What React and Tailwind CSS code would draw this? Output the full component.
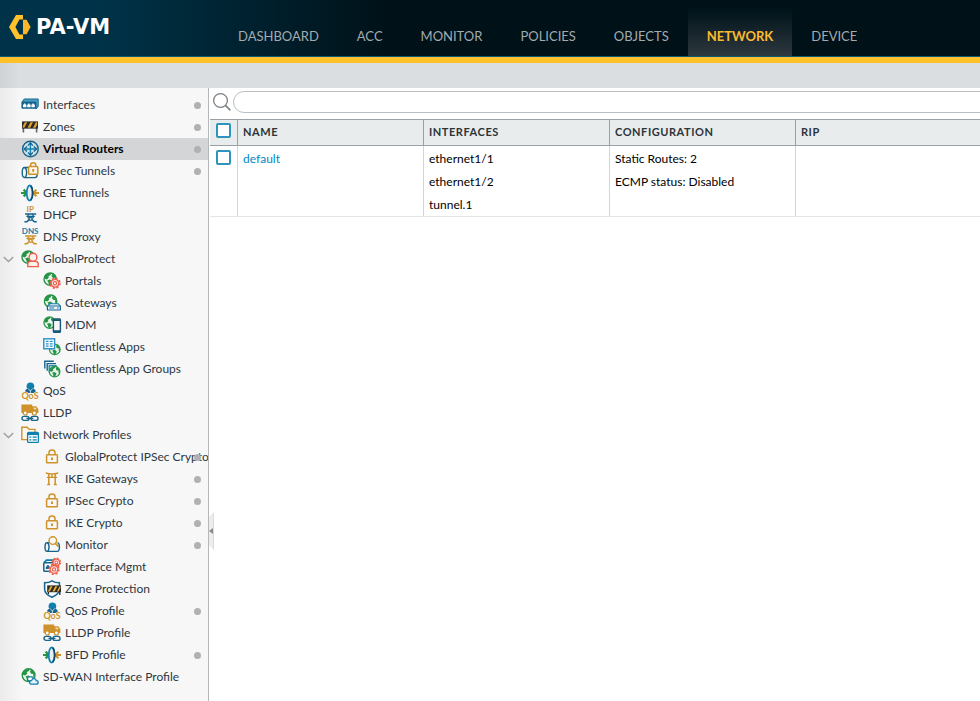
import { useState } from "react";

const BLUE = "#0f7fae";
const NAVY = "#17648c";
const GOLD = "#cf922b";
const GREEN = "#259444";
const RED = "#ee5f4a";

function Icon({ children }) {
  return (
    <svg viewBox="0 0 18 18" className="h-[18px] w-[18px] shrink-0 overflow-visible" fill="none" aria-hidden="true">
      {children}
    </svg>
  );
}

function Globe({ x = 7.2, y = 7.2, r = 7 }) {
  return (
    <g transform={`translate(${x} ${y}) scale(${r / 7})`}>
      <circle r="6.2" fill="#edf5ef" stroke={GREEN} strokeWidth="1.4" />
      <path d="M-5.8-2C-4.6-5-1.6-6.4 1-6L.4-4.2-1.8-3-1.4-1.4-3.4.2-5.6-.4Z" fill={GREEN} />
      <path d="M2.2-5.8C5.6-4.2 6.6-.8 5.8 2.2L4.4 1 4.6-1.2 2.6-1.4 1.4-3Z" fill={GREEN} />
      <path d="M-3 1.2-.4.4 2.2 1.8 1.8 3.8.2 6-1.4 5.4-1.8 3.2Z" fill={GREEN} />
    </g>
  );
}

function InterfacesIcon() {
  return (
    <Icon>
      <path d="M1 6 3.2 3h14v7.4L15 13.2" fill="#4aa0c4" />
      <path d="M1 6 3.2 3h14v7.2L15 13" stroke={NAVY} strokeWidth="1" />
      <rect x=".4" y="5.6" width="15" height="7.2" rx="1" fill={NAVY} />
      <path d="M2 11.2V8.6h1v-1h1.4v1h1v2.6ZM6.2 11.2V8.6h1v-1h1.4v1h1v2.6ZM10.4 11.2V8.6h1v-1h1.4v1h1v2.6Z" fill="#fff" />
    </Icon>
  );
}

function ZonesIcon() {
  return (
    <Icon>
      <path d="M2.4 9v5.4M15.6 9v5.4" stroke="#666" strokeWidth="1.6" />
      <rect x="1" y="3.4" width="16" height="7.2" fill="#2b2926" />
      <path d="M3.8 4.2h2.4L3.4 9.8H1.8V8ZM9.4 4.2h2.6L9.2 9.8H6.6ZM14.8 4.2h1.4v2.4l-1.6 3.2H12Z" fill="#dda12f" />
    </Icon>
  );
}

function RouterIcon() {
  return (
    <Icon>
      <circle cx="9.4" cy="9" r="7.8" fill="#cfe0e9" stroke={NAVY} strokeWidth="1.4" />
      <path d="M9.4 3v12M3.4 9h12" stroke={BLUE} strokeWidth="1.3" />
      <path d="m7 5.6 2.4-2.8 2.4 2.8M7 12.4l2.4 2.8 2.4-2.8M6 6.6 3.2 9 6 11.4M12.8 6.6 15.6 9l-2.8 2.4" stroke={NAVY} strokeWidth="1.3" />
    </Icon>
  );
}

function IpsecTunnelIcon() {
  return (
    <Icon>
      <path d="M7 5.5H3.5C2 5.5 1.2 7.8 1.2 10.6S2 15.6 3.5 15.6H14c1.6 0 2.2-1.4 2.2-3M3.6 5.5c1.4.6 2 2.6 2 5.1s-.6 4.4-2 5" stroke={NAVY} strokeWidth="1.4" />
      <rect x="7.6" y="4.6" width="9.2" height="7.6" rx=".8" fill="#fdf7ea" stroke={GOLD} strokeWidth="1.5" />
      <path d="M9.6 4.6V3.2C9.6 0 14.8 0 14.8 3.2v1.4" stroke={GOLD} strokeWidth="1.5" />
      <path d="M12.2 7v2.8" stroke={GOLD} strokeWidth="2" />
    </Icon>
  );
}

function GreIcon() {
  return (
    <Icon>
      <path d="M0 9h5.6M2.6 5.6 6 9l-3.4 3.4" stroke={GREEN} strokeWidth="2.2" />
      <path d="M18 9h-5.4M15.4 5.8 12.2 9l3.2 3.2" stroke={GOLD} strokeWidth="2" />
      <ellipse cx="8.6" cy="9" rx="2.8" ry="7.6" fill="#e6eff4" stroke={BLUE} strokeWidth="1.6" />
      <path d="M9.8 1.8c2.8 3.2 2.8 11.2 0 14.4" stroke="#0f4767" strokeWidth="1.5" />
    </Icon>
  );
}

function NodeShape({ color }) {
  return (
    <g stroke={color}>
      <path d="M4 8h11.2M5.4 10.4h8.4" strokeWidth="1.4" />
      <path d="M8 8c-2 2.4-1.2 4 0 4.2M11.2 8c2 2.4 1.2 4 0 4.2" strokeWidth="1.2" />
      <circle cx="9.6" cy="12.8" r="1.5" strokeWidth="1.3" />
      <path d="M8.2 13.6 5.8 15.8H3.4M11 13.6l2.4 2.2h2.4" strokeWidth="1.6" />
    </g>
  );
}

function DhcpIcon() {
  return (
    <Icon>
      <text x="5.6" y="6" fontSize="8" fontWeight="700" fontFamily="Lato, sans-serif" fill={GOLD}>IP</text>
      <NodeShape color={NAVY} />
    </Icon>
  );
}

function DnsIcon() {
  return (
    <Icon>
      <text x=".8" y="6" fontSize="8" fontWeight="700" fontFamily="Lato, sans-serif" fill={BLUE}>DNS</text>
      <NodeShape color={GOLD} />
    </Icon>
  );
}

function GlobalProtectIcon() {
  return (
    <Icon>
      <Globe />
      <path d="M6.8 16.6V14c0-1.6 1-2.4 2.6-2.6h5.2c1.6.2 2.6 1 2.6 2.6v2.6Z" fill="#fdf0ee" stroke={RED} strokeWidth="1.4" />
      <circle cx="12" cy="7.2" r="3.9" fill="#fdf0ee" stroke={RED} strokeWidth="1.4" />
    </Icon>
  );
}

function Gear({ x, y }) {
  return (
    <g transform={`translate(${x} ${y})`}>
      <circle r="4.9" stroke={RED} strokeWidth="1.6" strokeDasharray="2.1 1.75" />
      <circle r="3.9" stroke={RED} strokeWidth="1.3" fill="#fde6e2" />
      <circle r="1.6" stroke={RED} strokeWidth="1.2" fill="#fff" />
    </g>
  );
}

function PortalsIcon() {
  return (
    <Icon>
      <Globe />
      <Gear x={12} y={11.2} />
    </Icon>
  );
}

function GatewaysIcon() {
  return (
    <Icon>
      <Globe x={7.6} />
      <path d="M4.6 12.2 7 9.8h8.2l2.2 2.4" fill="#eef6fa" stroke={BLUE} strokeWidth="1.1" />
      <rect x="4.4" y="12" width="13" height="4" rx=".6" fill="#eef6fa" stroke={NAVY} strokeWidth="1.2" />
      <path d="M6.2 14h5M14 14h1.8" stroke={BLUE} strokeWidth="1.1" />
    </Icon>
  );
}

function MdmIcon() {
  return (
    <Icon>
      <Globe x={6.6} y={6.6} r={6.4} />
      <rect x="10.4" y="3" width="7" height="13.4" rx=".8" fill="#f7f7f7" stroke="#155878" strokeWidth="1.4" />
      <path d="M10.4 4.2h7M10.4 15.2h7" stroke="#155878" strokeWidth="1.8" />
    </Icon>
  );
}

function AppsIcon() {
  return (
    <Icon>
      <Globe x={11.8} y={11.4} r={6} />
      <rect x=".8" y=".8" width="10.8" height="10" fill="#fff" stroke="#2b8fc4" strokeWidth="1.4" />
      <path d="M2.8 3.4h2.8M6.8 3.4h2.8M2.8 5.8h2.8M6.8 5.8h2.8M2.8 8.2h2.8M6.8 8.2h2.8" stroke="#2b8fc4" strokeWidth="1.3" />
    </Icon>
  );
}

function AppGroupsIcon() {
  return (
    <Icon>
      <path d="M1.8 8.4V1.2h9M4.2 10.8V3.6h8.8" stroke={NAVY} strokeWidth="1.4" />
      <rect x="6.2" y="5.8" width="7" height="6" fill="#fff" stroke={BLUE} strokeWidth="1.3" />
      <Globe x={11.6} y={11.6} r={6} />
    </Icon>
  );
}

function QosIcon() {
  return (
    <Icon>
      <circle cx="9.4" cy="4.2" r="3.8" fill={BLUE} />
      <path d="M3.8 11c0-2.8 1.4-4 3.2-4.4h4.8c1.8.4 3.2 1.6 3.2 4.4" fill={NAVY} />
      <path d="M7 6.4 9.4 9l2.4-2.6M9.4 8.6V11" stroke="#bcdcea" strokeWidth="1" />
      <text x=".4" y="16.6" fontSize="9" fontWeight="700" fontFamily="Lato, sans-serif" fill={GOLD} stroke="#f7f7f7" strokeWidth="1" paintOrder="stroke">QoS</text>
    </Icon>
  );
}

function LldpIcon() {
  return (
    <Icon>
      <path d="M.4.6h10.8V9H.4ZM11.2 2.2h4L17.4 5v4h-6.2Z" fill={GOLD} />
      <path d="M12.6 3.4h2l1.2 1.8h-3.2Z" fill="#f5dfb4" />
      <circle cx="4.2" cy="9" r="2" fill="#fff" stroke={GOLD} strokeWidth="1.2" />
      <circle cx="13.4" cy="9" r="2" fill="#fff" stroke={GOLD} strokeWidth="1.2" />
      <rect x="1" y="12.4" width="7" height="4" rx="2" stroke={NAVY} strokeWidth="1.4" />
      <rect x="10" y="12.4" width="7" height="4" rx="2" stroke={NAVY} strokeWidth="1.4" />
      <path d="M5.4 14.4h7" stroke={NAVY} strokeWidth="1.4" />
    </Icon>
  );
}

function ProfilesIcon() {
  return (
    <Icon>
      <path d="M6 13.6H.8V1.2h5.4L8 3.4h6V7" fill="#fdf9f1" stroke={GOLD} strokeWidth="1.4" />
      <rect x="6.6" y="6.4" width="10.8" height="10" rx="1" fill="#fff" stroke={BLUE} strokeWidth="1.3" />
      <path d="M6.6 8h10.8" stroke={BLUE} strokeWidth="2.2" />
      <path d="M8.4 11.2h2M11.6 11.2h4.2M8.4 13.8h2M11.6 13.8h4.2" stroke={BLUE} strokeWidth="1.2" />
    </Icon>
  );
}

function LockIcon() {
  return (
    <Icon>
      <rect x="3.6" y="6.8" width="10.8" height="8" rx=".8" stroke={GOLD} strokeWidth="1.5" />
      <path d="M6 6.8V4.6C6 1.2 12 1.2 12 4.6v2.2" stroke={GOLD} strokeWidth="1.5" />
      <path d="M9 9.6V12" stroke={GOLD} strokeWidth="2" />
    </Icon>
  );
}

function GateIcon() {
  return (
    <Icon>
      <path d="M2.8 3c3.6 1 8.8 1 12.4 0M3.8 7.4h10.4M9 4v3.4" stroke={GOLD} strokeWidth="1.4" />
      <path d="M5.8 4v10.6M12.2 4v10.6M4.2 14.6h3M10.8 14.6h3" stroke={GOLD} strokeWidth="1.5" />
    </Icon>
  );
}

function MonitorIcon() {
  return (
    <Icon>
      <path d="M6.6 6.6H4C2.6 6.6 2 8.6 2 11s.6 4.4 2 4.4h10.4c1.4 0 2-2 2-4.4s-.6-4.2-2-4.4M4 6.6c1.4.4 2 2.2 2 4.4s-.6 4-2 4.4" stroke={NAVY} strokeWidth="1.4" />
      <circle cx="9.8" cy="4.6" r="3.8" fill="#fdf9f1" stroke={GOLD} strokeWidth="1.4" />
      <path d="m12.4 7.4 3 3.2" stroke={GOLD} strokeWidth="1.6" />
    </Icon>
  );
}

function InterfaceMgmtIcon() {
  return (
    <Icon>
      <path d="M1 4.8 3.4 2.2h8" stroke={BLUE} strokeWidth="1.8" />
      <rect x=".8" y="4.8" width="10.6" height="8.4" rx=".8" fill="#fff" stroke={NAVY} strokeWidth="1.5" />
      <path d="M2.8 11V8.6h1V7.2H6v1.4h1V11Z" fill={NAVY} />
      <g transform="translate(3.8 -3.6) scale(.85)">
        <Gear x={11.2} y={9.4} />
      </g>
      <Gear x={11} y={11.4} />
    </Icon>
  );
}

function ZoneProtectionIcon() {
  return (
    <Icon>
      <path d="M9 .8c2 1.4 4.6 2 7.4 2V9c0 3.600-3 6.400-7.400 8.200C4.600 15.400 1.600 12.600 1.600 9V2.800C4.400 2.800 7 2.200 9 .8Z" fill="#f3f8fb" stroke={NAVY} strokeWidth="1.5" />
      <path d="M5.4 11v3M16.8 11v4" stroke="#2b2926" strokeWidth="1.3" />
      <rect x="4.2" y="5.4" width="13.8" height="6.8" fill="#2b2926" />
      <path d="M7.4 6.2h2.2L6.8 11.4H4.8ZM12.2 6.2h2.2l-2.8 5.2H9.4ZM16.600 6.200h.8V8l-1.800 3.400h-1.800Z" fill="#e2aa35" />
    </Icon>
  );
}

function SdwanIcon() {
  return (
    <Icon>
      <Globe x={7.6} y={7.2} r={7.2} />
      <rect x="6.4" y="8.8" width="6" height="4" rx="2" fill="#fff" stroke={BLUE} strokeWidth="1.3" />
      <path d="M10.8 16.2c-2.8 0-2.8-3.6-.2-3.6.6-2.6 4.4-2.4 4.6 0 2.6 0 2.6 3.6 0 3.600Z" fill="#eaf5fa" stroke={BLUE} strokeWidth="1.3" />
    </Icon>
  );
}

const tree = [
  { label: "Interfaces", icon: InterfacesIcon, dot: true },
  { label: "Zones", icon: ZonesIcon, dot: true },
  { label: "Virtual Routers", icon: RouterIcon, dot: true },
  { label: "IPSec Tunnels", icon: IpsecTunnelIcon, dot: true },
  { label: "GRE Tunnels", icon: GreIcon },
  { label: "DHCP", icon: DhcpIcon },
  { label: "DNS Proxy", icon: DnsIcon },
  {
    label: "GlobalProtect",
    icon: GlobalProtectIcon,
    children: [
      { label: "Portals", icon: PortalsIcon },
      { label: "Gateways", icon: GatewaysIcon },
      { label: "MDM", icon: MdmIcon },
      { label: "Clientless Apps", icon: AppsIcon },
      { label: "Clientless App Groups", icon: AppGroupsIcon },
    ],
  },
  { label: "QoS", icon: QosIcon },
  { label: "LLDP", icon: LldpIcon },
  {
    label: "Network Profiles",
    icon: ProfilesIcon,
    children: [
      { label: "GlobalProtect IPSec Crypto", icon: LockIcon, dot: true },
      { label: "IKE Gateways", icon: GateIcon, dot: true },
      { label: "IPSec Crypto", icon: LockIcon, dot: true },
      { label: "IKE Crypto", icon: LockIcon, dot: true },
      { label: "Monitor", icon: MonitorIcon, dot: true },
      { label: "Interface Mgmt", icon: InterfaceMgmtIcon },
      { label: "Zone Protection", icon: ZoneProtectionIcon },
      { label: "QoS Profile", icon: QosIcon, dot: true },
      { label: "LLDP Profile", icon: LldpIcon },
      { label: "BFD Profile", icon: GreIcon, dot: true },
    ],
  },
  { label: "SD-WAN Interface Profile", icon: SdwanIcon },
];

const tabs = ["DASHBOARD", "ACC", "MONITOR", "POLICIES", "OBJECTS", "NETWORK", "DEVICE"];

const routers = [
  {
    name: "default",
    interfaces: ["ethernet1/1", "ethernet1/2", "tunnel.1"],
    configuration: ["Static Routes: 2", "ECMP status: Disabled"],
    rip: [],
  },
];

function TreeItem({ item, nested, selected, onSelect }) {
  const [open, setOpen] = useState(true);
  const ItemIcon = item.icon;
  const isSelected = selected === item.label;

  return (
    <li>
      <div className={`relative flex h-[22px] items-center overflow-hidden ${nested ? "pl-[43px]" : ""} ${isSelected ? "bg-[#d4d5d7]" : ""}`}>
        {!nested && (
          <span className="flex w-[21px] shrink-0 items-center pl-[3px]">
            {item.children && (
              <button type="button" aria-label={`Toggle ${item.label}`} aria-expanded={open} onClick={() => setOpen(!open)}>
                <svg viewBox="0 0 11 7" className="h-[7px] w-[11px]" fill="none">
                  <path d="m.8 1 4.7 4.6L10.2 1" stroke="#9a9da0" strokeWidth="1.4" />
                </svg>
              </button>
            )}
          </span>
        )}
        <a
          href="#"
          onClick={(e) => {
            e.preventDefault();
            onSelect(item.label);
          }}
          className={`flex items-center gap-1 whitespace-nowrap ${isSelected ? "font-bold text-black" : "text-[#2c373f]"}`}
        >
          <ItemIcon />
          {item.label}
        </a>
        {item.dot && <span className="absolute right-[7px] h-[7px] w-[7px] rounded-full bg-[#b1b1b1]" />}
      </div>
      {item.children && open && (
        <ul>
          {item.children.map((child) => (
            <TreeItem key={child.label} item={child} nested selected={selected} onSelect={onSelect} />
          ))}
        </ul>
      )}
    </li>
  );
}

function Header() {
  const [active, setActive] = useState("NETWORK");

  return (
    <header>
      <div className="flex h-[57px] border-b border-[#0b5a78] bg-linear-to-r from-[#003349] from-10% to-[#001118] to-40%">
        <div className="flex w-[219px] shrink-0 items-start gap-1 pt-3 pl-2">
          <svg viewBox="0 0 24 28" className="mt-px h-7 w-6" aria-hidden="true">
            <path d="M8 2h7v4.6h-3.6L7.4 14l4 7.4H15V26H8L1 14Z" fill="#ffc22d" />
            <path d="M15 6.8h3.6L22.6 14l-4 7.2H15Z" fill="#fdb52a" />
          </svg>
          <span className="font-['DejaVu_Sans',sans-serif] text-[21px] leading-[30px] font-bold text-white">PA-VM</span>
        </div>
        <nav className="flex">
          {tabs.map((tab) => (
            <a
              key={tab}
              href="#"
              onClick={(e) => {
                e.preventDefault();
                setActive(tab);
              }}
              className={`flex items-center px-[19px] pt-[18px] text-[13px] ${active === tab ? "bg-linear-to-b from-[#001118] from-10% to-[#2e383e] font-bold text-[#fdb92b]" : "text-[#a3abaf]"}`}
            >
              {tab}
            </a>
          ))}
        </nav>
      </div>
      <div className="h-1.5 bg-[#ffc12a]" />
      <div className="h-[25px] bg-linear-to-r from-[#d0d3d6] to-[#dadee1] to-2%" />
    </header>
  );
}

function CheckBox({ label, checked, onChange }) {
  return <input type="checkbox" aria-label={label} checked={checked} onChange={onChange} className="block h-[15px] w-[15px] appearance-none rounded-xs border-2 border-[#2f93bd] bg-white checked:bg-[#2f93bd]" />;
}

function RouterTable() {
  const [checked, setChecked] = useState(false);
  const toggle = () => setChecked(!checked);
  const headCell = "border-r border-[#9aa0a3] px-[5px] text-left text-[11px] font-bold tracking-wider text-[#2c3439]";
  const cell = "border-r border-[#d3d5d6] px-[5px] pt-px align-top leading-[23px]";

  return (
    <table className="w-full table-fixed border-separate border-spacing-0">
      <colgroup>
        <col className="w-7" />
        <col className="w-[186px]" />
        <col className="w-[186px]" />
        <col className="w-[186px]" />
        <col />
      </colgroup>
      <thead>
        <tr className="h-[27px] bg-[#e9ecec] *:border-y *:border-y-[#9aa0a3]">
          <th className="border-r border-[#9aa0a3] pb-1 pl-1.5">
            <CheckBox label="Select all" checked={checked} onChange={toggle} />
          </th>
          <th className={headCell}>NAME</th>
          <th className={headCell}>INTERFACES</th>
          <th className={headCell}>CONFIGURATION</th>
          <th className="px-[5px] text-left text-[11px] font-bold tracking-wider text-[#2c3439]">RIP</th>
        </tr>
      </thead>
      <tbody>
        {routers.map((router) => (
          <tr key={router.name} className="*:border-b *:border-b-[#e4e5e6]">
            <td className="border-r border-[#d3d5d6] pt-1 pl-1.5 align-top">
              <CheckBox label={`Select ${router.name}`} checked={checked} onChange={toggle} />
            </td>
            <td className={cell}>
              <a href="#" className="text-[#0088c7]">
                {router.name}
              </a>
            </td>
            <td className={cell}>
              {router.interfaces.map((line) => (
                <div key={line}>{line}</div>
              ))}
            </td>
            <td className={cell}>
              {router.configuration.map((line) => (
                <div key={line}>{line}</div>
              ))}
            </td>
            <td className="px-[5px] align-top">{router.rip.join(", ")}</td>
          </tr>
        ))}
      </tbody>
    </table>
  );
}

export default function App() {
  const [selected, setSelected] = useState("Virtual Routers");
  const [query, setQuery] = useState("");

  return (
    <div className="flex min-h-screen flex-col overflow-hidden bg-white font-[Lato,sans-serif] text-xs text-black">
      <Header />
      <div className="flex grow">
        <aside className="w-[209px] shrink-0 border-r border-[#b5b8ba] bg-linear-to-r from-[#ebebeb] to-[#f7f7f7] to-10% pt-1.5">
          <ul>
            {tree.map((item) => (
              <TreeItem key={item.label} item={item} selected={selected} onSelect={setSelected} />
            ))}
          </ul>
        </aside>
        <main className="relative min-w-0 grow pl-px">
          <div className="flex h-[31px] items-center gap-px overflow-hidden pb-1.5 pl-0.5">
            <svg viewBox="0 0 20 20" className="mt-0.5 h-5 w-5 shrink-0" fill="none" aria-hidden="true">
              <circle cx="8.5" cy="8.5" r="6.9" stroke="#7b8084" strokeWidth="1.3" />
              <path d="m13.4 13.4 5 5" stroke="#7b8084" strokeWidth="1.5" />
            </svg>
            <input type="search" aria-label="Search" value={query} onChange={(e) => setQuery(e.target.value)} className="-mr-4 mt-0.5 h-[22px] min-w-0 grow rounded-l-full border border-[#bcbfc1] px-3 outline-none" />
          </div>
          <RouterTable />
          <button type="button" aria-label="Collapse sidebar" className="absolute top-[424px] left-0">
            <svg viewBox="0 0 5 38" className="h-[38px] w-[5px]">
              <path d="M0 5 5 0v38l-5-5Z" fill="#ececec" />
              <path d="M4.5 1v36" stroke="#dcdcdc" />
              <path d="M4 16v6l-4-3Z" fill="#8a8a8a" />
            </svg>
          </button>
        </main>
      </div>
    </div>
  );
}
